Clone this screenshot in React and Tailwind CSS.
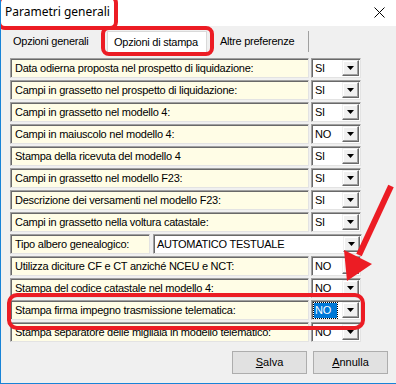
import React from 'react';

const rows = [
    { label: 'Data odierna proposta nel prospetto di liquidazione:', value: 'SI' },
    { label: 'Campi in grassetto nel prospetto di liquidazione:', value: 'SI' },
    { label: 'Campi in grassetto nel modello 4:', value: 'SI' },
    { label: 'Campi in maiuscolo nel modello 4:', value: 'NO' },
    { label: 'Stampa della ricevuta del modello 4', value: 'SI' },
    { label: 'Campi in grassetto nel modello F23:', value: 'SI' },
    { label: 'Descrizione dei versamenti nel modello F23:', value: 'SI' },
    { label: 'Campi in grassetto nella voltura catastale:', value: 'SI' },
    { label: 'Tipo albero genealogico:', value: 'AUTOMATICO TESTUALE', wide: true },
    { label: 'Utilizza diciture CF e CT anziché NCEU e NCT:', value: 'NO' },
    { label: 'Stampa del codice catastale nel modello 4:', value: 'NO' },
    { label: 'Stampa firma impegno trasmissione telematica:', value: 'NO', selected: true },
    { label: 'Stampa separatore delle migliaia in modello telematico:', value: 'NO' },
];

const Arrow = () => (
    <svg width="7" height="4" viewBox="0 0 7 4">
        <path d="M0 0h7L3.5 4z" fill="#000" />
    </svg>
);

const Combo = ({ value, selected, width }) => (
    <div className={`${width} h-[20px] flex bg-white border border-t-[#a0a0a0] border-l-[#a0a0a0] border-b-[#e3e3e3] border-r-[#e3e3e3] shadow-[inset_1px_1px_0_#696969]`}>
        <div className="flex-grow flex items-center pl-[2px] pt-[1px]">
            <span className={`px-[1px] leading-[15px] ${selected ? 'bg-[#0078d7] text-white outline-1 outline-dotted outline-[#000] pr-[6px]' : ''}`}>{value}</span>
        </div>
        <div className="w-[17px] mt-[1px] mb-[1px] mr-[1px] flex items-center justify-center bg-[#f0f0f0] border border-t-[#f0f0f0] border-l-[#f0f0f0] border-b-[#696969] border-r-[#696969] shadow-[inset_-1px_-1px_0_#a0a0a0,inset_1px_1px_0_#fff]">
            <Arrow />
        </div>
    </div>
);

const App = () => {
    return (
        <div className="w-[396px] h-[384px] relative overflow-hidden bg-[#f0f0f0] border-l border-b border-[#1883d7] flex flex-col text-[11px] tracking-[-0.25px] text-black" style={{ fontFamily: '"Liberation Sans", Arial, sans-serif' }}>
            {/* Title bar */}
            <div className="h-[26px] shrink-0 bg-white flex items-center justify-between pl-[4px] pr-[11px] tracking-normal">
                <span className="text-[12px] pb-[2px]" style={{ fontFamily: '"Noto Sans", "Liberation Sans", sans-serif' }}>Parametri generali</span>
                <svg width="11" height="11" viewBox="0 0 11 11" className="mb-[2px]">
                    <path d="M0.5 0.5L10.5 10.5M10.5 0.5L0.5 10.5" stroke="#000" strokeWidth="1" />
                </svg>
            </div>

            {/* Tabs */}
            <div className="h-[26px] shrink-0 flex items-end pl-[4px]">
                <div className="w-[102px] h-[21px] flex items-center pl-[8px]">Opzioni generali</div>
                <div className="w-[100px] h-[21px] flex items-center pl-[6px] bg-white border-l border-t border-r border-[#d9d9d9]">Opzioni di stampa</div>
                <div className="w-[102px] h-[21px] flex items-center pl-[13px] border-r border-[#a0a0a0]">Altre preferenze</div>
            </div>

            {/* Rows */}
            <div className="h-[290px] shrink-0 overflow-hidden pt-[6px] pl-[9px] flex flex-col gap-[2px]">
                {rows.map((r, i) => (
                    <div key={i} className={`flex h-[20px] shrink-0 ${r.wide ? 'gap-[3px]' : 'gap-[2px]'}`}>
                        <div className={`${r.wide ? 'w-[140px]' : 'w-[299px]'} h-[20px] flex items-center pl-[4px] pt-[1px] bg-[#fffde6] border border-t-[#a0a0a0] border-l-[#a0a0a0] border-b-[#e3e3e3] border-r-[#e3e3e3] shadow-[inset_1px_1px_0_#696969] whitespace-nowrap overflow-hidden`}>
                            {r.label}
                        </div>
                        <Combo value={r.value} selected={r.selected} width={r.wide ? 'w-[209px]' : 'w-[50px]'} />
                    </div>
                ))}
            </div>

            {/* Buttons */}
            <div className="flex justify-end gap-[6px] pr-[8px] pt-[9px] tracking-normal">
                <button className="w-[75px] h-[23px] bg-[#e1e1e1] border border-[#adadad]"><span className="underline">S</span>alva</button>
                <button className="w-[75px] h-[23px] bg-[#e1e1e1] border border-[#adadad]"><span className="underline">A</span>nnulla</button>
            </div>

            {/* Red annotations */}
            <div className="absolute left-[-4px] top-[-5px] w-[121px] h-[35px] border-[4px] border-[#ec1c24] rounded-[8px]" />
            <div className="absolute left-[100px] top-[26px] w-[113px] h-[30px] border-[4px] border-[#ec1c24] rounded-[8px]" />
            <div className="absolute left-[6px] top-[293px] w-[358px] h-[37px] border-[4px] border-[#ec1c24] rounded-[10px]" />
            <svg className="absolute left-0 top-0" width="396" height="384" viewBox="0 0 396 384">
                <line x1="390" y1="186" x2="358" y2="255" stroke="#ec1c24" strokeWidth="6" />
                <path d="M343 250L371 264L346 281z" fill="#ec1c24" />
            </svg>
        </div>
    );
};

export default App;
